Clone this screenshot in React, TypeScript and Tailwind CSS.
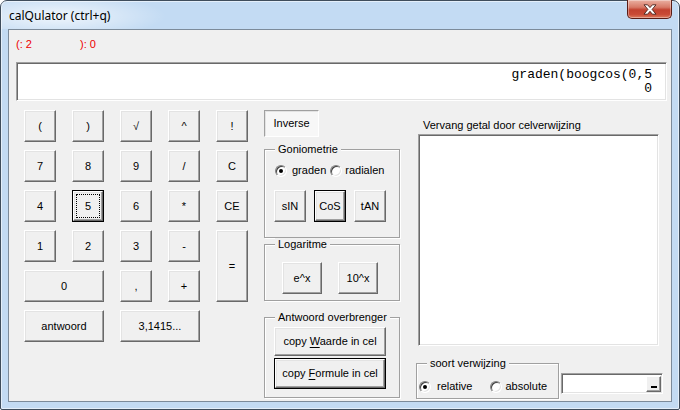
import React from "react";

function Btn({
  children,
  className = "",
  def = false,
  focus = false,
}: {
  children: React.ReactNode;
  className?: string;
  def?: boolean;
  focus?: boolean;
}) {
  return (
    <div className={`flex bg-[#f0f0f0] ${def ? "border border-black" : ""} ${className}`}>
      <div
        className={`flex-1 flex items-center justify-center border border-t-white border-l-white border-r-[#696969] border-b-[#696969] shadow-[inset_-1px_-1px_0_#a0a0a0,inset_1px_1px_0_#e3e3e3] ${
          focus ? "p-[2px]" : ""
        }`}
      >
        {focus ? (
          <div className="flex-1 self-stretch flex items-center justify-center border border-dotted border-black">
            {children}
          </div>
        ) : (
          children
        )}
      </div>
    </div>
  );
}

function Radio({
  checked = false,
  label,
  className = "",
  gap = "ml-[5px]",
}: {
  checked?: boolean;
  label: string;
  className?: string;
  gap?: string;
}) {
  return (
    <div className={`flex items-center leading-[13px] ${className}`}>
      <div className="w-[12px] h-[12px] rounded-full border border-t-[#808080] border-l-[#808080] border-r-white border-b-white bg-white shadow-[inset_1px_1px_0_#404040,inset_-1px_-1px_0_#e3e3e3] flex items-center justify-center">
        {checked && <div className="w-[4px] h-[4px] rounded-full bg-black" />}
      </div>
      <span className={gap}>{label}</span>
    </div>
  );
}

function Group({
  label,
  className = "",
  children,
}: {
  label: string;
  className?: string;
  children?: React.ReactNode;
}) {
  return (
    <div
      className={`flex flex-col border border-[#a0a0a0] shadow-[inset_1px_1px_0_#ffffff,1px_1px_0_#ffffff] ${className}`}
    >
      <div className="-mt-[7px] ml-[10px] px-[3px] bg-[#f0f0f0] w-fit leading-[13px]">{label}</div>
      {children}
    </div>
  );
}

export default function App() {
  return (
    <div className="w-[680px] h-[410px] bg-white font-['Liberation_Sans',Arial,sans-serif] text-[11px] text-black">
      <div className="w-full h-full flex flex-col rounded-t-[7px] rounded-b-[2px] border border-[#3f4d5c] bg-[#c3dbf3] px-[7px] pb-[7px] shadow-[inset_0_0_0_1px_rgba(255,255,255,0.55)]">
        {/* title bar */}
        <div className="h-[28px] flex justify-between items-start bg-[radial-gradient(ellipse_110px_22px_at_55px_15px,rgba(255,255,255,0.75),rgba(255,255,255,0))] -mx-[7px] px-[7px]">
          <span className="mt-[7px] text-[12px] leading-[16px] font-['Noto_Sans',sans-serif] text-black pl-[1px]">
            calQulator (ctrl+q)
          </span>
          <div className="-mt-[1px] w-[45px] h-[19px] rounded-b-[5px] border border-t-0 border-[#5a1d16] bg-[linear-gradient(to_bottom,#eab0a2_0%,#d77a68_40%,#c2412f_55%,#c94a35_80%,#dc7b5e_100%)] shadow-[inset_0_0_0_1px_rgba(255,255,255,0.35)] flex items-center justify-center">
            <svg width="14" height="11" viewBox="0 0 14 11">
              <path
                d="M1 0.8 H4.6 L7 3.6 L9.4 0.8 H13 L9.1 5.4 L13 10.2 H9.4 L7 7.3 L4.6 10.2 H1 L4.9 5.4 Z"
                fill="#ffffff"
                stroke="#47201a"
                strokeWidth="0.9"
                strokeLinejoin="round"
              />
            </svg>
          </div>
        </div>

        {/* client area */}
        <div className="flex-1 flex flex-col border border-[#7c8b9a] bg-[#f0f0f0]">
          <div className="flex pl-[7px] pt-[8px] leading-[13px] text-[#ee0000]">
            <span className="w-[64px]">(: 2</span>
            <span>): 0</span>
          </div>

          {/* display */}
          <div className="ml-[7px] mt-[11px] w-[651px] h-[39px] bg-white border border-t-[#a0a0a0] border-l-[#a0a0a0] border-r-white border-b-white shadow-[inset_1px_1px_0_#696969,inset_-1px_-1px_0_#e3e3e3] flex flex-col items-end pt-[5px] pr-[14px] font-['Liberation_Mono','Courier_New',monospace] text-[13px] leading-[14px]">
            <span>graden(boogcos(0,5</span>
            <span>0</span>
          </div>

          {/* main */}
          <div className="flex mt-[9px] pl-[15px]">
            {/* keypad */}
            <div className="grid grid-cols-[repeat(5,32px)] grid-rows-[repeat(6,32px)] gap-x-[16px] gap-y-[8px] h-fit">
              <Btn>(</Btn>
              <Btn>)</Btn>
              <Btn>√</Btn>
              <Btn>^</Btn>
              <Btn>!</Btn>
              <Btn>7</Btn>
              <Btn>8</Btn>
              <Btn>9</Btn>
              <Btn>/</Btn>
              <Btn>C</Btn>
              <Btn>4</Btn>
              <Btn def focus>
                5
              </Btn>
              <Btn>6</Btn>
              <Btn>*</Btn>
              <Btn>CE</Btn>
              <Btn>1</Btn>
              <Btn>2</Btn>
              <Btn>3</Btn>
              <Btn>-</Btn>
              <Btn className="row-span-2">=</Btn>
              <Btn className="col-span-2">0</Btn>
              <Btn>,</Btn>
              <Btn>+</Btn>
              <Btn className="col-span-2">antwoord</Btn>
              <Btn className="col-span-2">3,1415...</Btn>
            </div>

            {/* middle column */}
            <div className="ml-[16px] w-[136px] flex flex-col">
              <div className="w-[55px] h-[27px] flex items-center justify-center bg-[#f7f7f7] border border-t-[#a0a0a0] border-l-[#a0a0a0] border-r-white border-b-white shadow-[inset_1px_1px_0_#e3e3e3]">
                Inverse
              </div>

              <Group label="Goniometrie" className="mt-[12px] h-[89px]">
                <div className="flex mt-[8px] ml-[10px]">
                  <Radio checked label="graden" />
                  <Radio label="radialen" className="ml-[4px]" gap="ml-[3px]" />
                </div>
                <div className="flex mt-[13px] ml-[9px] gap-[8px]">
                  <Btn className="w-[32px] h-[32px]">sIN</Btn>
                  <Btn def className="w-[32px] h-[32px]">
                    CoS
                  </Btn>
                  <Btn className="w-[32px] h-[32px]">tAN</Btn>
                </div>
              </Group>

              <Group label="Logaritme" className="mt-[6px] h-[57px]">
                <div className="flex mt-[11px] ml-[17px] gap-[16px]">
                  <Btn className="w-[40px] h-[32px]">e^x</Btn>
                  <Btn className="w-[40px] h-[32px]">10^x</Btn>
                </div>
              </Group>

              <Group label="Antwoord overbrenger" className="mt-[16px] h-[81px]">
                <Btn className="mt-[3px] ml-[9px] w-[112px] h-[29px]">
                  <span>
                    copy <span className="underline underline-offset-[2px]">W</span>aarde in cel
                  </span>
                </Btn>
                <Btn def className="mt-[2px] ml-[9px] w-[112px] h-[31px]">
                  <span>
                    copy <span className="underline underline-offset-[2px]">F</span>ormule in cel
                  </span>
                </Btn>
              </Group>
            </div>

            {/* right column */}
            <div className="ml-[16px] w-[247px] flex flex-col">
              <div className="mt-[9px] pl-[7px] leading-[13px]">Vervang getal door celverwijzing</div>
              <div className="ml-[2px] mt-[2px] w-[241px] h-[212px] bg-white border border-t-[#a0a0a0] border-l-[#a0a0a0] border-r-white border-b-white shadow-[inset_1px_1px_0_#696969,inset_-1px_-1px_0_#e3e3e3]" />
              <div className="flex items-start mt-[17px]">
                <Group label="soort verwijzing" className="w-[143px] h-[36px]">
                  <div className="flex mt-[10px] ml-[2px]">
                    <Radio checked label="relative" gap="ml-[6px]" />
                    <Radio label="absolute" className="ml-[18px]" gap="ml-[3px]" />
                  </div>
                </Group>
                <div className="ml-[2px] mt-[10px] w-[102px] h-[21px] bg-white border border-t-[#a0a0a0] border-l-[#a0a0a0] border-r-white border-b-white shadow-[inset_1px_1px_0_#696969,inset_-1px_-1px_0_#e3e3e3] flex justify-end items-end pr-[1px] pb-[1px]">
                  <div className="w-[15px] h-[16px] flex items-end justify-center pb-[3px] bg-[#f0f0f0] border border-t-white border-l-white border-r-[#696969] border-b-[#696969] shadow-[inset_-1px_-1px_0_#a0a0a0]">
                    <div className="w-[6px] h-[2px] bg-black" />
                  </div>
                </div>
              </div>
            </div>
          </div>
        </div>
      </div>
    </div>
  );
}
